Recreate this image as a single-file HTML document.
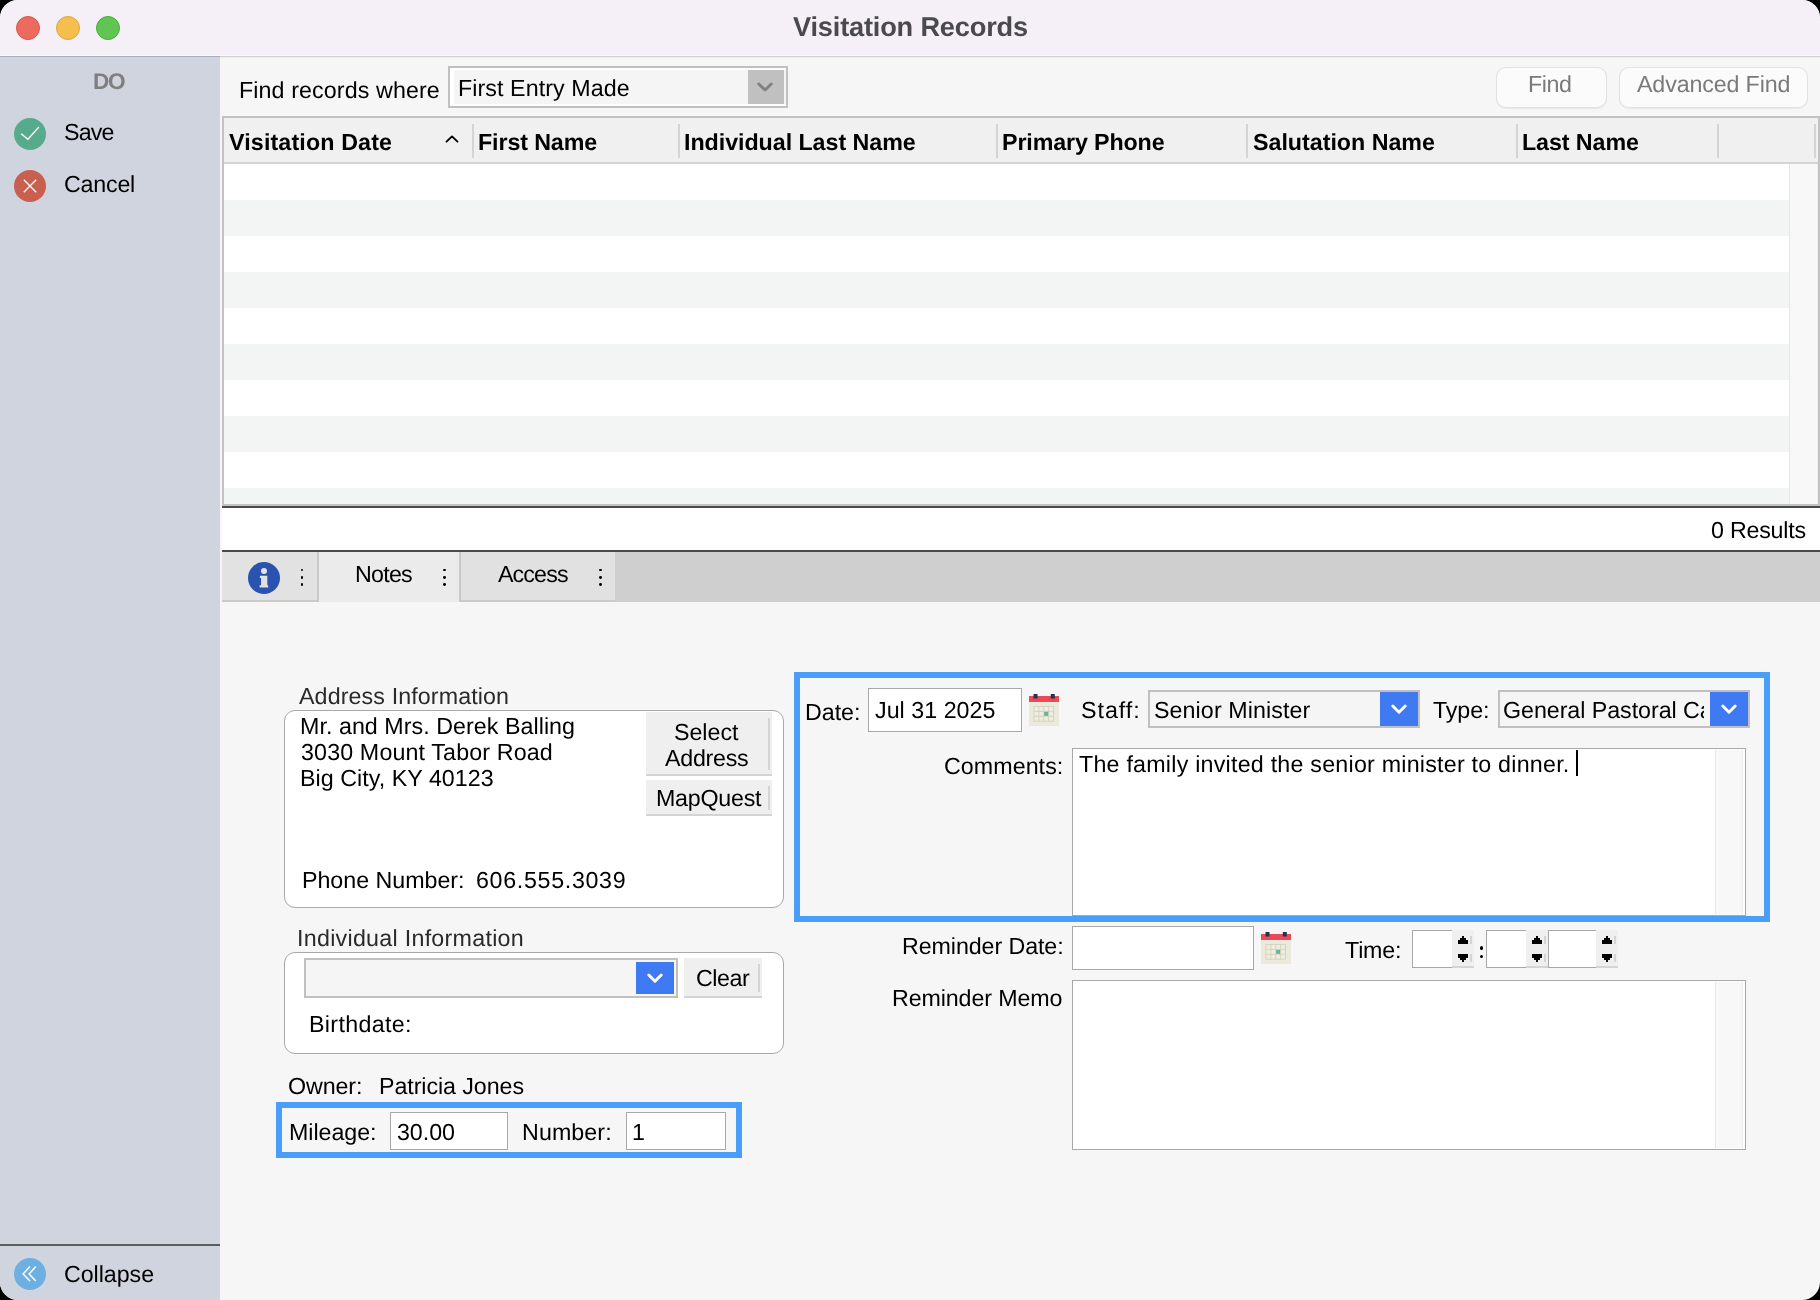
<!DOCTYPE html>
<html><head><meta charset="utf-8"><style>
html,body{margin:0;padding:0;background:#000;width:1820px;height:1300px;overflow:hidden}
.win{position:absolute;left:0;top:0;width:1820px;height:1300px;border-radius:18px;overflow:hidden;background:#f6f6f6;font-family:"Liberation Sans", sans-serif}
.r{position:absolute}
.t{position:absolute;white-space:nowrap;line-height:1;font-family:"Liberation Sans", sans-serif;text-rendering:geometricPrecision;will-change:transform}
</style></head><body><div class="win">
<div class="r" style="left:0px;top:0px;width:1820px;height:55px;background:#f5f0f7"></div>
<div class="r" style="left:0px;top:55px;width:1820px;height:1px;background:#faf6fb"></div>
<div class="r" style="left:0px;top:56px;width:220px;height:1px;background:#a6aeb9"></div>
<div class="r" style="left:220px;top:56px;width:1600px;height:1px;background:#d0d0d0"></div>
<div class="r" style="left:220px;top:57px;width:1600px;height:1px;background:#ededed"></div>
<div class="r" style="left:16px;top:16px;width:24px;height:24px;border-radius:50%;background:#ed6a5e;box-sizing:border-box;border:0.6px solid #d8574b"></div>
<div class="r" style="left:56px;top:16px;width:24px;height:24px;border-radius:50%;background:#f5bf4f;box-sizing:border-box;border:0.6px solid #dca63c"></div>
<div class="r" style="left:96px;top:16px;width:24px;height:24px;border-radius:50%;background:#61c554;box-sizing:border-box;border:0.6px solid #4eaa40"></div>
<div class="r" style="left:0px;top:57px;width:220px;height:1243px;background:#d0d4de"></div>
<div class="r" style="left:0px;top:1244px;width:220px;height:2px;background:#5a5c60"></div>
<svg class="r" style="left:14px;top:118px" width="32" height="32" viewBox="0 0 32 32"><circle cx="16" cy="16" r="16" fill="#57ab8c"/><polyline points="7.2,15.8 13.9,21.3 24.9,9" fill="none" stroke="#fff" stroke-width="1.3"/></svg>
<svg class="r" style="left:14px;top:170px" width="32" height="32" viewBox="0 0 32 32"><circle cx="16" cy="16" r="16" fill="#c9604f"/><path d="M9.8 9.8 L22.2 22.2 M22.2 9.8 L9.8 22.2" fill="none" stroke="#fff" stroke-width="1.3"/></svg>
<svg class="r" style="left:14px;top:1258px" width="32" height="32" viewBox="0 0 32 32"><circle cx="16" cy="16" r="16" fill="#6cafe0"/><path d="M16 8.6 L9.1 16 L16 23.1 M21.8 8.6 L15.1 16 L21.8 23.1" fill="none" stroke="#fff" stroke-width="1.5"/></svg>
<div class="r" style="left:448px;top:66px;width:340px;height:42px;background:#c0c0c0"></div>
<div class="r" style="left:450px;top:68px;width:336px;height:38px;background:#ffffff"></div>
<div class="r" style="left:454px;top:70px;width:332px;height:34px;background:#f5f5f5"></div>
<div class="r" style="left:748px;top:70px;width:36px;height:34px;background:#c0c0c0"></div>
<svg class="r" style="left:757px;top:81px" width="16" height="12" viewBox="0 0 16 12"><polyline points="1.8,3 8,9 14.2,3" fill="none" stroke="#808080" stroke-width="2.9" stroke-linecap="round" stroke-linejoin="round"/></svg>
<div class="r" style="left:1496px;top:66.5px;width:110.5px;height:41.0px;background:#fbfbfb;border:1px solid #e2e2e2;border-radius:10px;box-sizing:border-box;box-shadow:0 0.5px 1px rgba(0,0,0,0.06)"></div>
<div class="r" style="left:1619px;top:66.5px;width:189px;height:41.0px;background:#fbfbfb;border:1px solid #e2e2e2;border-radius:10px;box-sizing:border-box;box-shadow:0 0.5px 1px rgba(0,0,0,0.06)"></div>
<div class="r" style="left:222px;top:116px;width:1598px;height:389px;background:#c2c2c2"></div>
<div class="r" style="left:224px;top:118px;width:1594px;height:44px;background:#f0f0f0"></div>
<div class="r" style="left:224px;top:162px;width:1594px;height:2px;background:#d4d4d4"></div>
<div class="r" style="left:224px;top:164px;width:1565px;height:340px;background:#ffffff"></div>
<div class="r" style="left:224px;top:200px;width:1565px;height:36px;background:#f3f4f4"></div>
<div class="r" style="left:224px;top:272px;width:1565px;height:36px;background:#f3f4f4"></div>
<div class="r" style="left:224px;top:344px;width:1565px;height:36px;background:#f3f4f4"></div>
<div class="r" style="left:224px;top:416px;width:1565px;height:36px;background:#f3f4f4"></div>
<div class="r" style="left:224px;top:488px;width:1565px;height:16px;background:#f3f4f4"></div>
<div class="r" style="left:1789px;top:164px;width:1px;height:340px;background:#e6e6e6"></div>
<div class="r" style="left:1790px;top:164px;width:27px;height:340px;background:#f8f8f8"></div>
<div class="r" style="left:1817px;top:164px;width:1px;height:340px;background:#efefef"></div>
<div class="r" style="left:472px;top:124px;width:2px;height:34px;background:#d4d4d4"></div>
<div class="r" style="left:678px;top:124px;width:2px;height:34px;background:#d4d4d4"></div>
<div class="r" style="left:996px;top:124px;width:2px;height:34px;background:#d4d4d4"></div>
<div class="r" style="left:1246px;top:124px;width:2px;height:34px;background:#d4d4d4"></div>
<div class="r" style="left:1516px;top:124px;width:2px;height:34px;background:#d4d4d4"></div>
<div class="r" style="left:1717px;top:124px;width:2px;height:34px;background:#d4d4d4"></div>
<div class="r" style="left:1814px;top:124px;width:2px;height:34px;background:#d4d4d4"></div>
<svg class="r" style="left:444px;top:132px" width="16" height="12" viewBox="0 0 16 12"><polyline points="2.5,9.6 8,4.4 13.5,9.6" fill="none" stroke="#000" stroke-width="1.9" stroke-linejoin="round" stroke-linecap="round"/></svg>
<div class="r" style="left:222px;top:505px;width:1598px;height:1px;background:#c4c4c4"></div>
<div class="r" style="left:222px;top:506px;width:1598px;height:2px;background:#4a4a4a"></div>
<div class="r" style="left:222px;top:508px;width:1598px;height:42px;background:#ffffff"></div>
<div class="r" style="left:222px;top:550px;width:1598px;height:2px;background:#4a4a4a"></div>
<div class="r" style="left:222px;top:552px;width:1598px;height:50px;background:#cfcfcf"></div>
<div class="r" style="left:222px;top:552px;width:95px;height:50px;background:#e2e2e2"></div>
<div class="r" style="left:222px;top:600px;width:95px;height:2px;background:#cacaca"></div>
<div class="r" style="left:317px;top:552px;width:2px;height:50px;background:#c9c9c9"></div>
<div class="r" style="left:319px;top:552px;width:140px;height:50px;background:#ebebeb"></div>
<div class="r" style="left:459px;top:552px;width:2px;height:50px;background:#c9c9c9"></div>
<div class="r" style="left:461px;top:552px;width:154px;height:50px;background:#e1e1e1"></div>
<div class="r" style="left:461px;top:600px;width:154px;height:2px;background:#cacaca"></div>
<svg class="r" style="left:248px;top:562px" width="32" height="32" viewBox="0 0 32 32"><circle cx="16" cy="16" r="16" fill="#2a53b0"/><circle cx="16" cy="8.9" r="3" fill="#e2e2e2"/><path d="M11.9 13.8 H19.3 V23.2 H20.2 V25.4 H11.6 V23.2 H13.1 V16 H11.9 Z" fill="#e2e2e2"/></svg>
<div class="r" style="left:300.55px;top:568.55px;width:2.9px;height:2.9px;border-radius:50%;background:#000"></div>
<div class="r" style="left:300.55px;top:575.8px;width:2.9px;height:2.9px;border-radius:50%;background:#000"></div>
<div class="r" style="left:300.55px;top:583.05px;width:2.9px;height:2.9px;border-radius:50%;background:#000"></div>
<div class="r" style="left:442.85px;top:568.55px;width:2.9px;height:2.9px;border-radius:50%;background:#000"></div>
<div class="r" style="left:442.85px;top:575.8px;width:2.9px;height:2.9px;border-radius:50%;background:#000"></div>
<div class="r" style="left:442.85px;top:583.05px;width:2.9px;height:2.9px;border-radius:50%;background:#000"></div>
<div class="r" style="left:598.8px;top:568.55px;width:2.9px;height:2.9px;border-radius:50%;background:#000"></div>
<div class="r" style="left:598.8px;top:575.8px;width:2.9px;height:2.9px;border-radius:50%;background:#000"></div>
<div class="r" style="left:598.8px;top:583.05px;width:2.9px;height:2.9px;border-radius:50%;background:#000"></div>
<div class="r" style="left:284px;top:710px;width:500px;height:198px;background:#fff;border:1px solid #a9a9a9;border-radius:11px;box-sizing:border-box"></div>
<div class="r" style="left:646px;top:712px;width:126px;height:62px;background:#efefef"></div><div class="r" style="left:646px;top:774px;width:126px;height:2px;background:#d4d4d4"></div><div class="r" style="left:768px;top:718px;width:2px;height:52px;background:#d4d4d4"></div>
<div class="r" style="left:646px;top:780px;width:126px;height:34px;background:#efefef"></div><div class="r" style="left:646px;top:814px;width:126px;height:2px;background:#d4d4d4"></div><div class="r" style="left:768px;top:786px;width:2px;height:24px;background:#d4d4d4"></div>
<div class="r" style="left:284px;top:952px;width:500px;height:102px;background:#fff;border:1px solid #a9a9a9;border-radius:11px;box-sizing:border-box"></div>
<div class="r" style="left:304px;top:958px;width:374px;height:40px;background:#c0c0c0"></div><div class="r" style="left:306px;top:960px;width:370px;height:36px;background:#f5f5f5"></div><div class="r" style="left:636px;top:962px;width:38px;height:32px;background:#3f7af2"></div><svg class="r" style="left:647.0px;top:972.0px" width="16" height="12" viewBox="0 0 16 12"><polyline points="1.8,3 8,9.2 14.2,3" fill="none" stroke="#fff" stroke-width="2.9" stroke-linecap="round" stroke-linejoin="round"/></svg>
<div class="r" style="left:684px;top:958px;width:78px;height:38px;background:#efefef"></div><div class="r" style="left:684px;top:996px;width:78px;height:2px;background:#d4d4d4"></div><div class="r" style="left:758px;top:964px;width:2px;height:28px;background:#d4d4d4"></div>
<div class="r" style="left:276px;top:1102px;width:466px;height:56px;border:6px solid #4a9ef8;box-sizing:border-box"></div>
<div class="r" style="left:390px;top:1112px;width:118px;height:38px;background:#fff;border:1px solid #a8a8a8;box-sizing:border-box"></div>
<div class="r" style="left:626px;top:1112px;width:100px;height:38px;background:#fff;border:1px solid #a8a8a8;box-sizing:border-box"></div>
<div class="r" style="left:794px;top:672px;width:976px;height:250px;border:6px solid #4a9ef8;box-sizing:border-box"></div>
<div class="r" style="left:868px;top:688px;width:154px;height:44px;background:#fff;border:1px solid #a8a8a8;box-sizing:border-box"></div>
<svg class="r" style="left:1029px;top:694px" width="30" height="32" viewBox="0 0 30 32"><rect x="0" y="2" width="30" height="6" fill="#e84a5a"/><rect x="0" y="8" width="30" height="24" fill="#ebe9db"/><rect x="4.5" y="12" width="20.5" height="15.7" fill="#d8d3bd"/><rect x="5.50" y="13.00" width="3.88" height="3.90" fill="#efede2"/><rect x="5.50" y="17.90" width="3.88" height="3.90" fill="#efede2"/><rect x="5.50" y="22.80" width="3.88" height="3.90" fill="#efede2"/><rect x="10.38" y="13.00" width="3.88" height="3.90" fill="#efede2"/><rect x="10.38" y="17.90" width="3.88" height="3.90" fill="#efede2"/><rect x="10.38" y="22.80" width="3.88" height="3.90" fill="#efede2"/><rect x="15.25" y="13.00" width="3.88" height="3.90" fill="#efede2"/><rect x="15.25" y="17.90" width="3.88" height="3.90" fill="#5cb89a"/><rect x="15.25" y="22.80" width="3.88" height="3.90" fill="#efede2"/><rect x="20.12" y="13.00" width="3.88" height="3.90" fill="#efede2"/><rect x="20.12" y="17.90" width="3.88" height="3.90" fill="#efede2"/><rect x="20.12" y="22.80" width="3.88" height="3.90" fill="#efede2"/><rect x="4.5" y="0" width="4" height="4.5" fill="#253247"/><rect x="21.8" y="0" width="4" height="4.5" fill="#253247"/></svg>
<div class="r" style="left:1148px;top:690px;width:272px;height:38px;background:#c0c0c0"></div><div class="r" style="left:1150px;top:692px;width:268px;height:34px;background:#f5f5f5"></div><div class="r" style="left:1380px;top:692px;width:38px;height:34px;background:#3f7af2"></div><svg class="r" style="left:1391.0px;top:703.0px" width="16" height="12" viewBox="0 0 16 12"><polyline points="1.8,3 8,9.2 14.2,3" fill="none" stroke="#fff" stroke-width="2.9" stroke-linecap="round" stroke-linejoin="round"/></svg>
<div class="r" style="left:1498px;top:690px;width:252px;height:38px;background:#c0c0c0"></div><div class="r" style="left:1500px;top:692px;width:248px;height:34px;background:#f5f5f5"></div><div class="r" style="left:1710px;top:692px;width:38px;height:34px;background:#3f7af2"></div><svg class="r" style="left:1721.0px;top:703.0px" width="16" height="12" viewBox="0 0 16 12"><polyline points="1.8,3 8,9.2 14.2,3" fill="none" stroke="#fff" stroke-width="2.9" stroke-linecap="round" stroke-linejoin="round"/></svg>
<div class="r" style="left:1072px;top:748px;width:674px;height:168px;background:#fff;border:1px solid #a8a8a8;box-sizing:border-box"></div><div class="r" style="left:1715px;top:750px;width:1px;height:164px;background:#e6e6e6"></div><div class="r" style="left:1716px;top:750px;width:26px;height:164px;background:#f8f8f8"></div><div class="r" style="left:1742px;top:750px;width:1px;height:164px;background:#ececec"></div>
<div class="r" style="left:1576px;top:750px;width:2px;height:26px;background:#000"></div>
<div class="r" style="left:1072px;top:926px;width:182px;height:44px;background:#fff;border:1px solid #a8a8a8;box-sizing:border-box"></div>
<svg class="r" style="left:1261px;top:932px" width="30" height="32" viewBox="0 0 30 32"><rect x="0" y="2" width="30" height="6" fill="#e84a5a"/><rect x="0" y="8" width="30" height="24" fill="#ebe9db"/><rect x="4.5" y="12" width="20.5" height="15.7" fill="#d8d3bd"/><rect x="5.50" y="13.00" width="3.88" height="3.90" fill="#efede2"/><rect x="5.50" y="17.90" width="3.88" height="3.90" fill="#efede2"/><rect x="5.50" y="22.80" width="3.88" height="3.90" fill="#efede2"/><rect x="10.38" y="13.00" width="3.88" height="3.90" fill="#efede2"/><rect x="10.38" y="17.90" width="3.88" height="3.90" fill="#efede2"/><rect x="10.38" y="22.80" width="3.88" height="3.90" fill="#efede2"/><rect x="15.25" y="13.00" width="3.88" height="3.90" fill="#efede2"/><rect x="15.25" y="17.90" width="3.88" height="3.90" fill="#5cb89a"/><rect x="15.25" y="22.80" width="3.88" height="3.90" fill="#efede2"/><rect x="20.12" y="13.00" width="3.88" height="3.90" fill="#efede2"/><rect x="20.12" y="17.90" width="3.88" height="3.90" fill="#efede2"/><rect x="20.12" y="22.80" width="3.88" height="3.90" fill="#efede2"/><rect x="4.5" y="0" width="4" height="4.5" fill="#253247"/><rect x="21.8" y="0" width="4" height="4.5" fill="#253247"/></svg>
<div class="r" style="left:1412px;top:930px;width:40px;height:38px;background:#fff;border:1px solid #a8a8a8;border-right:none;box-sizing:border-box"></div><div class="r" style="left:1452px;top:930px;width:22px;height:36px;background:#efefef"></div><div class="r" style="left:1452px;top:966px;width:22px;height:2px;background:#d4d4d4"></div><div class="r" style="left:1470px;top:936px;width:2px;height:8px;background:#d4d4d4"></div><div class="r" style="left:1470px;top:954px;width:2px;height:8px;background:#d4d4d4"></div><div class="r" style="left:1462px;top:936px;width:2px;height:2px;background:#000"></div><div class="r" style="left:1460px;top:938px;width:6px;height:2px;background:#000"></div><div class="r" style="left:1458px;top:940px;width:10px;height:4px;background:#000"></div><div class="r" style="left:1458px;top:954px;width:10px;height:3.5px;background:#000"></div><div class="r" style="left:1460px;top:957.5px;width:6px;height:2.5px;background:#000"></div><div class="r" style="left:1462px;top:960px;width:2px;height:2px;background:#000"></div>
<div class="r" style="left:1486px;top:930px;width:40px;height:38px;background:#fff;border:1px solid #a8a8a8;border-right:none;box-sizing:border-box"></div><div class="r" style="left:1526px;top:930px;width:22px;height:36px;background:#efefef"></div><div class="r" style="left:1526px;top:966px;width:22px;height:2px;background:#d4d4d4"></div><div class="r" style="left:1544px;top:936px;width:2px;height:8px;background:#d4d4d4"></div><div class="r" style="left:1544px;top:954px;width:2px;height:8px;background:#d4d4d4"></div><div class="r" style="left:1536px;top:936px;width:2px;height:2px;background:#000"></div><div class="r" style="left:1534px;top:938px;width:6px;height:2px;background:#000"></div><div class="r" style="left:1532px;top:940px;width:10px;height:4px;background:#000"></div><div class="r" style="left:1532px;top:954px;width:10px;height:3.5px;background:#000"></div><div class="r" style="left:1534px;top:957.5px;width:6px;height:2.5px;background:#000"></div><div class="r" style="left:1536px;top:960px;width:2px;height:2px;background:#000"></div>
<div class="r" style="left:1548px;top:930px;width:48px;height:38px;background:#fff;border:1px solid #a8a8a8;border-right:none;box-sizing:border-box"></div><div class="r" style="left:1596px;top:930px;width:22px;height:36px;background:#efefef"></div><div class="r" style="left:1596px;top:966px;width:22px;height:2px;background:#d4d4d4"></div><div class="r" style="left:1614px;top:936px;width:2px;height:8px;background:#d4d4d4"></div><div class="r" style="left:1614px;top:954px;width:2px;height:8px;background:#d4d4d4"></div><div class="r" style="left:1606px;top:936px;width:2px;height:2px;background:#000"></div><div class="r" style="left:1604px;top:938px;width:6px;height:2px;background:#000"></div><div class="r" style="left:1602px;top:940px;width:10px;height:4px;background:#000"></div><div class="r" style="left:1602px;top:954px;width:10px;height:3.5px;background:#000"></div><div class="r" style="left:1604px;top:957.5px;width:6px;height:2.5px;background:#000"></div><div class="r" style="left:1606px;top:960px;width:2px;height:2px;background:#000"></div>
<div class="r" style="left:1479.5px;top:946.2px;width:3.4px;height:3.4px;border-radius:50%;background:#000"></div>
<div class="r" style="left:1479.5px;top:954.6px;width:3.4px;height:3.4px;border-radius:50%;background:#000"></div>
<div class="r" style="left:1072px;top:980px;width:674px;height:170px;background:#fff;border:1px solid #a8a8a8;box-sizing:border-box"></div><div class="r" style="left:1715px;top:982px;width:1px;height:166px;background:#e6e6e6"></div><div class="r" style="left:1716px;top:982px;width:26px;height:166px;background:#f8f8f8"></div><div class="r" style="left:1742px;top:982px;width:1px;height:166px;background:#ececec"></div>
<div class="t" style="left:793.00px;top:13.47px;font-size:27.2px;font-weight:bold;color:#4a4a4e;letter-spacing:-0.182px;">Visitation Records</div>
<div class="t" style="left:92.80px;top:71.37px;font-size:22.6px;font-weight:bold;color:#7f7f7f;letter-spacing:-1.416px;">DO</div>
<div class="t" style="left:63.70px;top:120.81px;font-size:23.25px;font-weight:normal;color:#000;letter-spacing:-0.854px;">Save</div>
<div class="t" style="left:64.00px;top:172.81px;font-size:23.25px;font-weight:normal;color:#000;letter-spacing:-0.221px;">Cancel</div>
<div class="t" style="left:63.80px;top:1262.81px;font-size:23.25px;font-weight:normal;color:#000;letter-spacing:-0.048px;">Collapse</div>
<div class="t" style="left:238.50px;top:78.81px;font-size:23.25px;font-weight:normal;color:#000;letter-spacing:0.102px;">Find records where</div>
<div class="t" style="left:458.20px;top:76.81px;font-size:23.25px;font-weight:normal;color:#000;letter-spacing:0.073px;">First Entry Made</div>
<div class="t" style="left:1528.00px;top:72.81px;font-size:23.25px;font-weight:normal;color:#7a7a7a;letter-spacing:-0.433px;">Find</div>
<div class="t" style="left:1636.70px;top:72.81px;font-size:23.25px;font-weight:normal;color:#7a7a7a;letter-spacing:-0.139px;">Advanced Find</div>
<div class="t" style="left:229.00px;top:130.81px;font-size:23.25px;font-weight:bold;color:#000;letter-spacing:0.133px;">Visitation Date</div>
<div class="t" style="left:478.25px;top:130.81px;font-size:23.25px;font-weight:bold;color:#000;letter-spacing:-0.110px;">First Name</div>
<div class="t" style="left:684.00px;top:130.81px;font-size:23.25px;font-weight:bold;color:#000;letter-spacing:-0.046px;">Individual Last Name</div>
<div class="t" style="left:1002.00px;top:130.81px;font-size:23.25px;font-weight:bold;color:#000;letter-spacing:-0.123px;">Primary Phone</div>
<div class="t" style="left:1253.00px;top:130.81px;font-size:23.25px;font-weight:bold;color:#000;letter-spacing:-0.017px;">Salutation Name</div>
<div class="t" style="left:1522.25px;top:130.81px;font-size:23.25px;font-weight:bold;color:#000;letter-spacing:-0.082px;">Last Name</div>
<div class="t" style="left:1711.00px;top:518.81px;font-size:23.25px;font-weight:normal;color:#000;letter-spacing:-0.224px;">0 Results</div>
<div class="t" style="left:354.60px;top:562.81px;font-size:23.25px;font-weight:normal;color:#000;letter-spacing:-0.753px;">Notes</div>
<div class="t" style="left:497.70px;top:562.81px;font-size:23.25px;font-weight:normal;color:#000;letter-spacing:-0.883px;">Access</div>
<div class="t" style="left:299.40px;top:684.81px;font-size:23.25px;font-weight:normal;color:#2a2a2a;letter-spacing:0.110px;">Address Information</div>
<div class="t" style="left:300.00px;top:714.81px;font-size:23.25px;font-weight:normal;color:#000;letter-spacing:0.044px;">Mr. and Mrs. Derek Balling</div>
<div class="t" style="left:301.00px;top:740.81px;font-size:23.25px;font-weight:normal;color:#000;letter-spacing:0.138px;">3030 Mount Tabor Road</div>
<div class="t" style="left:300.00px;top:766.81px;font-size:23.25px;font-weight:normal;color:#000;letter-spacing:0.042px;">Big City, KY 40123</div>
<div class="t" style="left:674.00px;top:720.81px;font-size:23.25px;font-weight:normal;color:#000;letter-spacing:-0.032px;">Select</div>
<div class="t" style="left:665.00px;top:746.81px;font-size:23.25px;font-weight:normal;color:#000;letter-spacing:-0.278px;">Address</div>
<div class="t" style="left:656.00px;top:786.81px;font-size:23.25px;font-weight:normal;color:#000;letter-spacing:-0.257px;">MapQuest</div>
<div class="t" style="left:302.00px;top:868.81px;font-size:23.25px;font-weight:normal;color:#000;letter-spacing:-0.032px;">Phone Number:</div>
<div class="t" style="left:475.90px;top:868.81px;font-size:23.25px;font-weight:normal;color:#000;letter-spacing:0.673px;">606.555.3039</div>
<div class="t" style="left:297.00px;top:926.81px;font-size:23.25px;font-weight:normal;color:#2a2a2a;letter-spacing:0.273px;">Individual Information</div>
<div class="t" style="left:696.00px;top:966.81px;font-size:23.25px;font-weight:normal;color:#000;letter-spacing:-0.454px;">Clear</div>
<div class="t" style="left:308.50px;top:1012.81px;font-size:23.25px;font-weight:normal;color:#000;letter-spacing:0.327px;">Birthdate:</div>
<div class="t" style="left:288.00px;top:1074.81px;font-size:23.25px;font-weight:normal;color:#000;letter-spacing:-0.096px;">Owner:</div>
<div class="t" style="left:379.00px;top:1074.81px;font-size:23.25px;font-weight:normal;color:#000;letter-spacing:-0.077px;">Patricia Jones</div>
<div class="t" style="left:288.50px;top:1120.81px;font-size:23.25px;font-weight:normal;color:#000;letter-spacing:-0.060px;">Mileage:</div>
<div class="t" style="left:397.00px;top:1120.81px;font-size:23.25px;font-weight:normal;color:#000;letter-spacing:-0.063px;">30.00</div>
<div class="t" style="left:522.40px;top:1120.81px;font-size:23.25px;font-weight:normal;color:#000;letter-spacing:0.085px;">Number:</div>
<div class="t" style="left:631.50px;top:1120.81px;font-size:23.25px;font-weight:normal;color:#000;letter-spacing:0.000px;">1</div>
<div class="t" style="left:804.50px;top:700.81px;font-size:23.25px;font-weight:normal;color:#000;letter-spacing:-0.028px;">Date:</div>
<div class="t" style="left:875.00px;top:698.81px;font-size:23.25px;font-weight:normal;color:#000;letter-spacing:0.021px;">Jul 31 2025</div>
<div class="t" style="left:1081.00px;top:698.81px;font-size:23.25px;font-weight:normal;color:#000;letter-spacing:0.981px;">Staff:</div>
<div class="t" style="left:1153.80px;top:698.81px;font-size:23.25px;font-weight:normal;color:#000;letter-spacing:0.085px;">Senior Minister</div>
<div class="t" style="left:1433.00px;top:698.81px;font-size:23.25px;font-weight:normal;color:#000;letter-spacing:-0.101px;">Type:</div>
<div class="t" style="left:943.80px;top:754.81px;font-size:23.25px;font-weight:normal;color:#000;letter-spacing:0.050px;">Comments:</div>
<div class="t" style="left:1079.20px;top:752.81px;font-size:23.25px;font-weight:normal;color:#000;letter-spacing:0.226px;">The family invited the senior minister to dinner.</div>
<div class="t" style="left:902.00px;top:934.81px;font-size:23.25px;font-weight:normal;color:#000;letter-spacing:-0.089px;">Reminder Date:</div>
<div class="t" style="left:1345.00px;top:938.81px;font-size:23.25px;font-weight:normal;color:#000;letter-spacing:-0.201px;">Time:</div>
<div class="t" style="left:891.90px;top:986.81px;font-size:23.25px;font-weight:normal;color:#000;letter-spacing:-0.118px;">Reminder Memo</div>
<div class="r" style="left:1501px;top:692px;width:203px;height:34px;overflow:hidden"><div class="t" style="left:2.00px;top:6.81px;font-size:23.25px;letter-spacing:-0.05px;color:#000">General Pastoral Care</div></div>
</div></body></html>
